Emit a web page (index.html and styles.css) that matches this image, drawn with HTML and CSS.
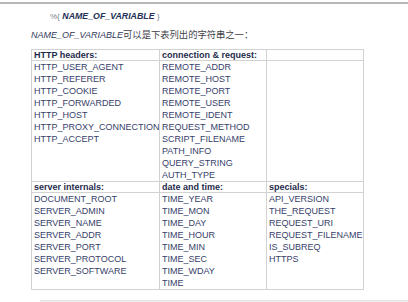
FILE: index.html
```html
<!DOCTYPE html>
<html>
<head>
<meta charset="utf-8">
<link rel="stylesheet" href="styles.css">
</head>
<body>
<div class="topbar"></div>
<div class="title"><span class="brace">%{</span> <span class="var">NAME_OF_VARIABLE</span> <span class="brace">}</span></div>
<div class="desc"><span class="ivar">NAME_OF_VARIABLE</span><span class="zh">可以是下表列出的字符串之一：</span></div>
<table class="vars">
  <colgroup><col class="c1"><col class="c2"><col class="c3"></colgroup>
  <tr class="head"><th>HTTP headers:</th><th>connection &amp; request:</th><th></th></tr>
  <tr class="data">
    <td>HTTP_USER_AGENT<br>HTTP_REFERER<br>HTTP_COOKIE<br>HTTP_FORWARDED<br>HTTP_HOST<br>HTTP_PROXY_CONNECTION<br>HTTP_ACCEPT</td>
    <td>REMOTE_ADDR<br>REMOTE_HOST<br>REMOTE_PORT<br>REMOTE_USER<br>REMOTE_IDENT<br>REQUEST_METHOD<br>SCRIPT_FILENAME<br>PATH_INFO<br>QUERY_STRING<br>AUTH_TYPE</td>
    <td></td>
  </tr>
  <tr class="head"><th>server internals:</th><th>date and time:</th><th>specials:</th></tr>
  <tr class="data">
    <td>DOCUMENT_ROOT<br>SERVER_ADMIN<br>SERVER_NAME<br>SERVER_ADDR<br>SERVER_PORT<br>SERVER_PROTOCOL<br>SERVER_SOFTWARE</td>
    <td>TIME_YEAR<br>TIME_MON<br>TIME_DAY<br>TIME_HOUR<br>TIME_MIN<br>TIME_SEC<br>TIME_WDAY<br>TIME</td>
    <td>API_VERSION<br>THE_REQUEST<br>REQUEST_URI<br>REQUEST_FILENAME<br>IS_SUBREQ<br>HTTPS</td>
  </tr>
</table>
<div class="bottombar"></div>
</body>
</html>
```

FILE: styles.css
```css
html, body {
  margin: 0;
  padding: 0;
  background: #ffffff;
}
body {
  font-family: "Liberation Sans", Arial, "Noto Sans CJK SC", sans-serif;
  font-size: 9px;
  color: #36416a;
  width: 408px;
  height: 302px;
  overflow: hidden;
}
.topbar {
  height: 2px;
  border-bottom: 2px solid #b8b8b8;
}
.title {
  margin-top: 6px;
  padding-left: 50px;
  line-height: 12px;
  height: 12px;
  white-space: nowrap;
}
.brace {
  color: #7a7f8c;
  font-size: 8px;
}
.var {
  font-weight: bold;
  font-style: italic;
  color: #243056;
  font-size: 8.8px;
}
.desc {
  margin-top: 6px;
  padding-left: 31px;
  line-height: 12px;
  height: 12px;
  white-space: nowrap;
  color: #3f3f4a;
  font-family: "Liberation Sans", "Noto Sans CJK SC", sans-serif;
}
.ivar {
  font-style: italic;
  color: #2e3858;
}
.zh {
  font-family: "Noto Sans CJK SC", sans-serif;
  font-size: 9.3px;
}
.vars {
  margin-top: 9px;
  margin-left: 31px;
  border-collapse: collapse;
  table-layout: fixed;
  width: 332px;
  border: 1px solid #c4c4c4;
}
.c1 { width: 128px; }
.c2 { width: 107px; }
.c3 { width: 97px; }
.vars th, .vars td {
  border: 1px solid #d2d2d2;
  padding: 0 2px;
  text-align: left;
  vertical-align: top;
  white-space: nowrap;
  overflow: hidden;
}
.head th {
  font-weight: bold;
  color: #1f2b4d;
  height: 10px;
  line-height: 10px;
}
.data td {
  line-height: 12px;
}
.bottombar {
  margin-top: 10px;
  margin-left: 40px;
  height: 6px;
  background: #efefef;
  border-top: 1px solid #e2e2e2;
}
```
